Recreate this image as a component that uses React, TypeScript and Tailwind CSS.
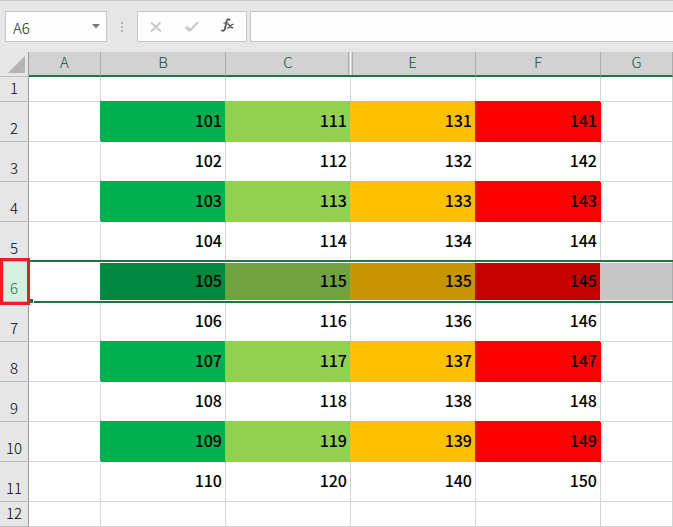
import { clsx } from 'clsx'

const columns = [
  { name: 'A', width: 'w-[71px]' },
  { name: 'B', width: 'w-[125px]' },
  { name: 'C', width: 'w-[125px]' },
  { name: 'E', width: 'w-[125px]' },
  { name: 'F', width: 'w-[125px]' },
  { name: 'G', width: '' },
]

const fills: Record<string, string> = {
  B: 'bg-[#00b050] shadow-[1px_1px_0_0_#00b050]',
  C: 'bg-[#92d050] shadow-[1px_1px_0_0_#92d050]',
  E: 'bg-[#ffc000] shadow-[1px_1px_0_0_#ffc000]',
  F: 'bg-[#ff0000] shadow-[1px_1px_0_0_#ff0000]',
}

// same fills, seen through the grey selection
const selectedFills: Record<string, string> = {
  A: 'bg-white',
  B: 'bg-[#00893e]',
  C: 'bg-[#71a23e]',
  E: 'bg-[#c69500]',
  F: 'bg-[#c60000]',
  G: 'bg-[#c6c6c6]',
}

const starts: Record<string, number> = { B: 101, C: 111, E: 131, F: 141 }
const rows = Array.from({ length: 12 }, (_, i) => i + 1)
const SELECTED = 6

function cellValue(column: string, row: number) {
  if (row < 2 || row > 11 || !(column in starts)) return null
  return starts[column] + row - 2
}

function FormulaBar() {
  return (
    <div className="flex h-[52px] items-start border-t border-[#c8c8c8] pt-[10px] pl-[5px]">
      <div className="flex h-[31px] w-[102px] shrink-0 items-center border border-[#c6c6c6] bg-[#fdfdfd]">
        <input
          aria-label="Name Box"
          defaultValue="A6"
          className="h-full w-0 flex-1 bg-transparent pt-px pl-[7px] text-[15px] font-light text-[#222] outline-none"
        />
        <button aria-label="Open Name Box" className="flex h-full w-5 items-center justify-center">
          <svg width="8" height="5" viewBox="0 0 8 5" fill="#777">
            <path d="M0 0h8L4 4.5z" />
          </svg>
        </button>
      </div>

      <div className="flex h-[31px] w-[30px] shrink-0 flex-col items-center justify-center gap-[2px]" aria-hidden="true">
        <span className="size-[2px] bg-[#b0b0b0]" />
        <span className="size-[2px] bg-[#b0b0b0]" />
        <span className="size-[2px] bg-[#b0b0b0]" />
      </div>

      <div className="flex h-[31px] w-[110px] shrink-0 items-center justify-between border border-[#c6c6c6] bg-[#fdfdfd] px-3">
        <button aria-label="Cancel">
          <svg width="12" height="12" viewBox="0 0 12 12" fill="none" stroke="#c8c8c8" strokeWidth="1.800">
            <path d="M1 1.500l10 9M10.500 1.500L1 10.500" />
          </svg>
        </button>
        <button aria-label="Enter">
          <svg width="14" height="12" viewBox="0 0 14 12" fill="none" stroke="#c8c8c8">
            <path d="M1 6l4 3.500" strokeWidth="3" />
            <path d="M4.500 10L13 1" strokeWidth="2" />
          </svg>
        </button>
        <button aria-label="Insert Function" className="pb-1">
          <svg width="13" height="14" viewBox="0 0 13 14" fill="none" stroke="#555" strokeLinecap="round">
            <path d="M8.500 1.800C7.500.6 6 1 5.500 3.500L4 10.500C3.600 12.500 2.400 13.200 1 12.400" strokeWidth="1.800" />
            <path d="M2.800 5h4.600" strokeWidth="1.200" />
            <path d="M7 6.600c2-.8 2 3.600 4.600 3.200M12 6.400c-2-.4-3 3.800-5.200 3.600" strokeWidth="1.400" />
          </svg>
        </button>
      </div>

      <input
        aria-label="Formula Bar"
        className="ml-[3px] h-[31px] min-w-0 flex-1 border border-r-0 border-[#c6c6c6] bg-[#fdfdfd] px-2 text-[15px] outline-none"
      />
    </div>
  )
}

function ColumnHeader({ name }: { name: string }) {
  return (
    <th
      scope="col"
      className={clsx(
        'relative border-b-2 border-b-[#217346] bg-[#d2d2d2] p-0 pb-[3px] text-center text-[15px] leading-[20px] font-light text-[#0f5236]',
        name !== 'A' && name !== 'E' && 'border-l border-l-[#ababab]',
        name === 'G' && 'border-r border-r-[#ababab]',
      )}
    >
      {name}
      {/* column D is hidden between C and E */}
      {name === 'E' && (
        <span className="absolute inset-y-0 -left-[2px] flex w-[5px] justify-center border-x border-[#ababab]">
          <span className="w-px bg-white" />
        </span>
      )}
    </th>
  )
}

function RowHeader({ row }: { row: number }) {
  const selected = row === SELECTED
  return (
    <th
      scope="row"
      className={clsx(
        'border-r border-r-[#9b9b9b] p-0 pb-1 text-center align-bottom text-[15px] leading-[19px] font-light',
        row > 1 && 'border-t border-t-[#bdbdbd]',
        row === 12 && 'border-b border-b-[#bdbdbd]',
        selected ? 'bg-[#d3f0e0] text-[#217346]' : 'bg-[#e6e6e6] text-black',
      )}
    >
      {row}
      {selected && (
        <>
          <span className="absolute -top-px right-0 left-[29px] z-20 h-[43px] border-y-2 border-[#217346]" />
          <span className="absolute top-[38px] left-[29px] z-20 box-content size-1 border-r border-white bg-[#217346]" />
          <span className="absolute -top-[3px] left-0 z-30 h-[47px] w-[30px] border-3 border-[#ee1c25]" />
        </>
      )}
    </th>
  )
}

function Cell({ column, row }: { column: string; row: number }) {
  const value = cellValue(column, row)
  const filled = value !== null && row % 2 === 0
  return (
    <td
      className={clsx(
        'p-0 pr-[3px] pb-[3px] text-right align-middle text-[16px] leading-[22px] font-medium text-black',
        row === SELECTED
          ? [
              'border-t-2 border-b border-y-white',
              selectedFills[column],
              column === 'G' && 'border-r border-r-[#ababab]',
            ]
          : [
              'border-[#d4d4d4]',
              row > 1 && 'border-t',
              row === 12 && 'border-b',
              column !== 'A' && 'border-l',
              column === 'G' && 'border-r',
            ],
        filled && row !== SELECTED && ['relative z-10 border-transparent bg-origin-border', fills[column]],
      )}
    >
      {value}
    </td>
  )
}

export default function App() {
  return (
    <main className="min-h-screen bg-[#e6e6e6] font-['Noto_Sans_CJK_JP',sans-serif]">
      <FormulaBar />
      <table className="w-full table-fixed border-separate border-spacing-0 bg-white">
        <colgroup>
          <col className="w-[29px]" />
          {columns.map((c) => (
            <col key={c.name} className={c.width} />
          ))}
        </colgroup>
        <thead>
          <tr className="h-[25px]">
            <td className="border-r border-b border-r-[#9b9b9b] border-b-[#bdbdbd] bg-[#e6e6e6] p-0">
              <button aria-label="Select all" className="ml-2 block">
                <svg width="17" height="17" viewBox="0 0 17 17" fill="#b4b4b4">
                  <path d="M17 0v17H0z" />
                </svg>
              </button>
            </td>
            {columns.map((c) => (
              <ColumnHeader key={c.name} name={c.name} />
            ))}
          </tr>
        </thead>
        <tbody>
          {rows.map((row) => (
            <tr
              key={row}
              className={clsx(
                row === 1 ? 'h-[24px]' : row === 12 ? 'h-[26px]' : 'h-10',
                row === SELECTED && 'relative',
              )}
            >
              <RowHeader row={row} />
              {columns.map((c) => (
                <Cell key={c.name} column={c.name} row={row} />
              ))}
            </tr>
          ))}
        </tbody>
      </table>
    </main>
  )
}
